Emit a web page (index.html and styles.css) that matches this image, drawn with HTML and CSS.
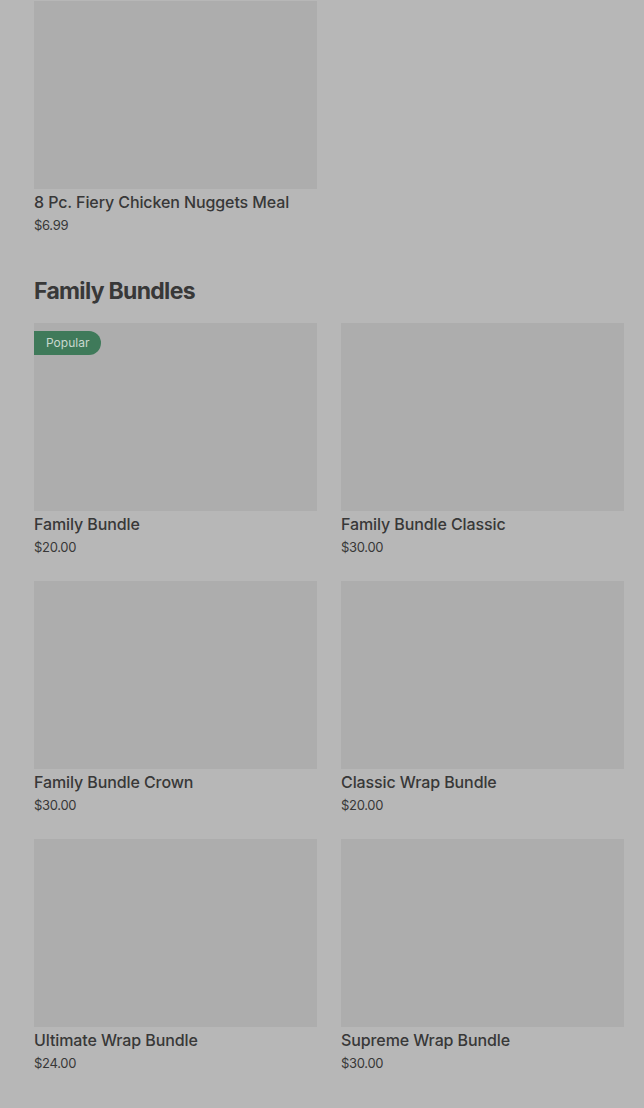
FILE: index.html
```html
<!DOCTYPE html>
<html lang="en">
<head>
  <meta charset="UTF-8" />
  <meta name="viewport" content="width=device-width, initial-scale=1.0"/>
  <title>Menu</title>
  <link rel="stylesheet" href="styles.css">
</head>
<body>
  <div class="menu">
    <div class="grid">
      <div class="item">
        <div class="thumb"></div>
        <p class="name">8 Pc. Fiery Chicken Nuggets Meal</p>
        <p class="price">$6.99</p>
      </div>
    </div>

    <h2 class="section-title">Family Bundles</h2>
    <div class="grid">
      <div class="item">
        <div class="thumb"><span class="badge">Popular</span></div>
        <p class="name">Family Bundle</p>
        <p class="price">$20.00</p>
      </div>
      <div class="item">
        <div class="thumb"></div>
        <p class="name">Family Bundle Classic</p>
        <p class="price">$30.00</p>
      </div>
      <div class="item">
        <div class="thumb"></div>
        <p class="name">Family Bundle Crown</p>
        <p class="price">$30.00</p>
      </div>
      <div class="item">
        <div class="thumb"></div>
        <p class="name">Classic Wrap Bundle</p>
        <p class="price">$20.00</p>
      </div>
      <div class="item">
        <div class="thumb"></div>
        <p class="name">Ultimate Wrap Bundle</p>
        <p class="price">$24.00</p>
      </div>
      <div class="item">
        <div class="thumb"></div>
        <p class="name">Supreme Wrap Bundle</p>
        <p class="price">$30.00</p>
      </div>
    </div>
  </div>
</body>
</html>
```

FILE: styles.css
```css
body {
  margin: 0;
  background: #b7b7b7;
  font-family: Inter, 'Noto Sans', sans-serif;
  color: #383838;
}
.menu {
  padding: 1px 20px 30px 34px;
}
.grid {
  display: grid;
  grid-template-columns: 283px 283px;
  column-gap: 24px;
  row-gap: 25px;
}
.item p {
  margin: 0;
}
.thumb {
  position: relative;
  height: 188px;
  background: #adadad;
}
.badge {
  position: absolute;
  top: 8px;
  left: 0;
  padding: 0 12px;
  height: 24px;
  line-height: 24px;
  font-size: 12px;
  color: #c9d8cf;
  background: #3f7a5a;
  border-radius: 0 12px 12px 0;
}
.name {
  margin-top: 3px !important;
  font-size: 16px;
  font-weight: 500;
  line-height: 20px;
  letter-spacing: -0.1px;
}
.price {
  margin-top: 4px !important;
  font-size: 13px;
  line-height: 18px;
  letter-spacing: -0.3px;
}
.section-title {
  margin: 41px 0 16px;
  font-size: 23px;
  font-weight: 700;
  line-height: 32px;
  letter-spacing: -0.7px;
}
```
